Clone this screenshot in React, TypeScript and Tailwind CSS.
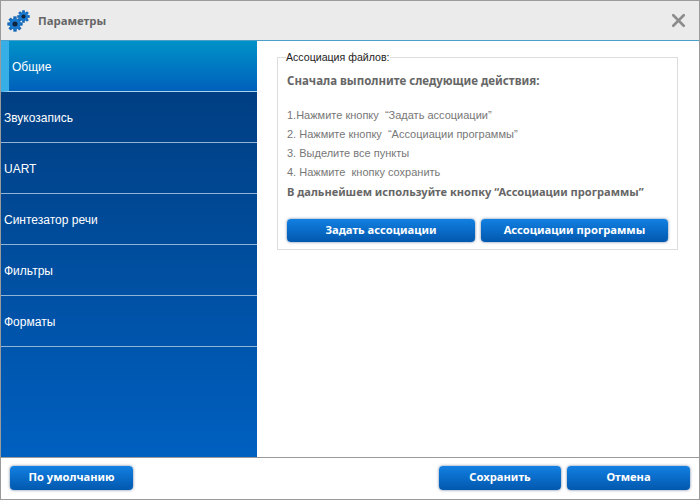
import { X } from "lucide-react";

const tabs = ["Звукозапись", "UART", "Синтезатор речи", "Фильтры", "Форматы"];

function Gear({ size, className }: { size: number; className?: string }) {
	const teeth = [0, 45, 90, 135, 180, 225, 270, 315];
	return (
		<svg width={size} height={size} viewBox="0 0 24 24" className={className}>
			{teeth.map((a) => (
				<rect key={a} x="9.5" y="0.5" width="5" height="6" fill="#1667b5" transform={`rotate(${a} 12 12)`} />
			))}
			<circle cx="12" cy="12" r="8.5" fill="#1a78cc" />
			<circle cx="12" cy="12" r="3.8" fill="#10243c" />
		</svg>
	);
}

function BlueButton({ label, className }: { label: string; className: string }) {
	return (
		<button className={`rounded-[4px] bg-gradient-to-b from-[#1280e2] to-[#0358ae] font-['Noto_Sans',sans-serif] text-[11.2px] font-bold text-white shadow-[0_0_3px_rgba(0,40,90,0.6)] ${className}`}>
			{label}
		</button>
	);
}

export default function App() {
	return (
		<div className="flex h-[500px] w-[700px] flex-col border border-[#9a9a9a] bg-white font-['Liberation_Sans',sans-serif]">
			<div className="flex h-[39px] shrink-0 items-center bg-[#ebebeb] pl-[6px] pr-[10px]">
				<div className="relative h-[26px] w-[31px]">
					<Gear size={16} className="absolute bottom-[2px] left-0" />
					<Gear size={13} className="absolute right-[8px] top-[2px]" />
				</div>
				<span className="font-['Noto_Sans',sans-serif] text-[11.4px] font-bold text-[#666666]">Параметры</span>
				<X className="ml-auto text-[#8c8c8c]" size={21} strokeWidth={3} />
			</div>

			<div className="flex min-h-0 flex-1 border-t border-[#4aa0c8]">
				<div className="flex w-[256px] shrink-0 flex-col bg-gradient-to-b from-[#003a7a] to-[#0060c0]">
					<div className="flex h-[51px] items-center border-b border-[#a9d3ee] border-l-[8px] border-l-[#38aee6] bg-gradient-to-b from-[#0092c8] to-[#0060bb] pl-[3px] pt-[2px] text-[12px] text-white">
						Общие
					</div>
					{tabs.map((t) => (
						<div key={t} className="flex h-[51px] items-center border-b border-[#8fb4d6] pl-[3px] pt-[2px] text-[12px] text-white">
							{t}
						</div>
					))}
				</div>

				<div className="flex-1 pl-[20px] pt-[9px]">
					<fieldset className="h-[200px] w-[401px] border border-[#dddddd] px-[9px]">
						<legend className="-ml-[1px] px-0 text-[10.6px] leading-[14px] text-[#222222]">Ассоциация файлов:</legend>
						<p className="mt-[7px] font-['Noto_Sans',sans-serif] text-[11.5px] font-bold leading-[19px] text-[#666666]">Сначала выполните следующие действия:</p>
						<div className="mt-[16px] whitespace-pre text-[11px] leading-[19px] text-[#777777]">
							<p>1.Нажмите кнопку  “Задать ассоциации”</p>
							<p>2. Нажмите кнопку  “Ассоциации программы”</p>
							<p>3. Выделите все пункты</p>
							<p>4. Нажмите  кнопку сохранить</p>
							<p className="font-['Noto_Sans',sans-serif] text-[11.1px] font-bold text-[#666666]">В дальнейшем используйте кнопку “Ассоциации программы”</p>
						</div>
						<div className="mt-[18px] flex gap-[6px]">
							<BlueButton label="Задать ассоциации" className="h-[23px] w-[188px]" />
							<BlueButton label="Ассоциации программы" className="h-[23px] w-[187px]" />
						</div>
					</fieldset>
				</div>
			</div>

			<div className="flex h-[42px] shrink-0 items-center border-t border-[#9a9a9a] pb-[2px] pl-[9px] pr-[9px]">
				<BlueButton label="По умолчанию" className="h-[24px] w-[123px]" />
				<BlueButton label="Сохранить" className="ml-auto h-[24px] w-[122px]" />
				<BlueButton label="Отмена" className="ml-[6px] h-[24px] w-[123px]" />
			</div>
		</div>
	);
}
